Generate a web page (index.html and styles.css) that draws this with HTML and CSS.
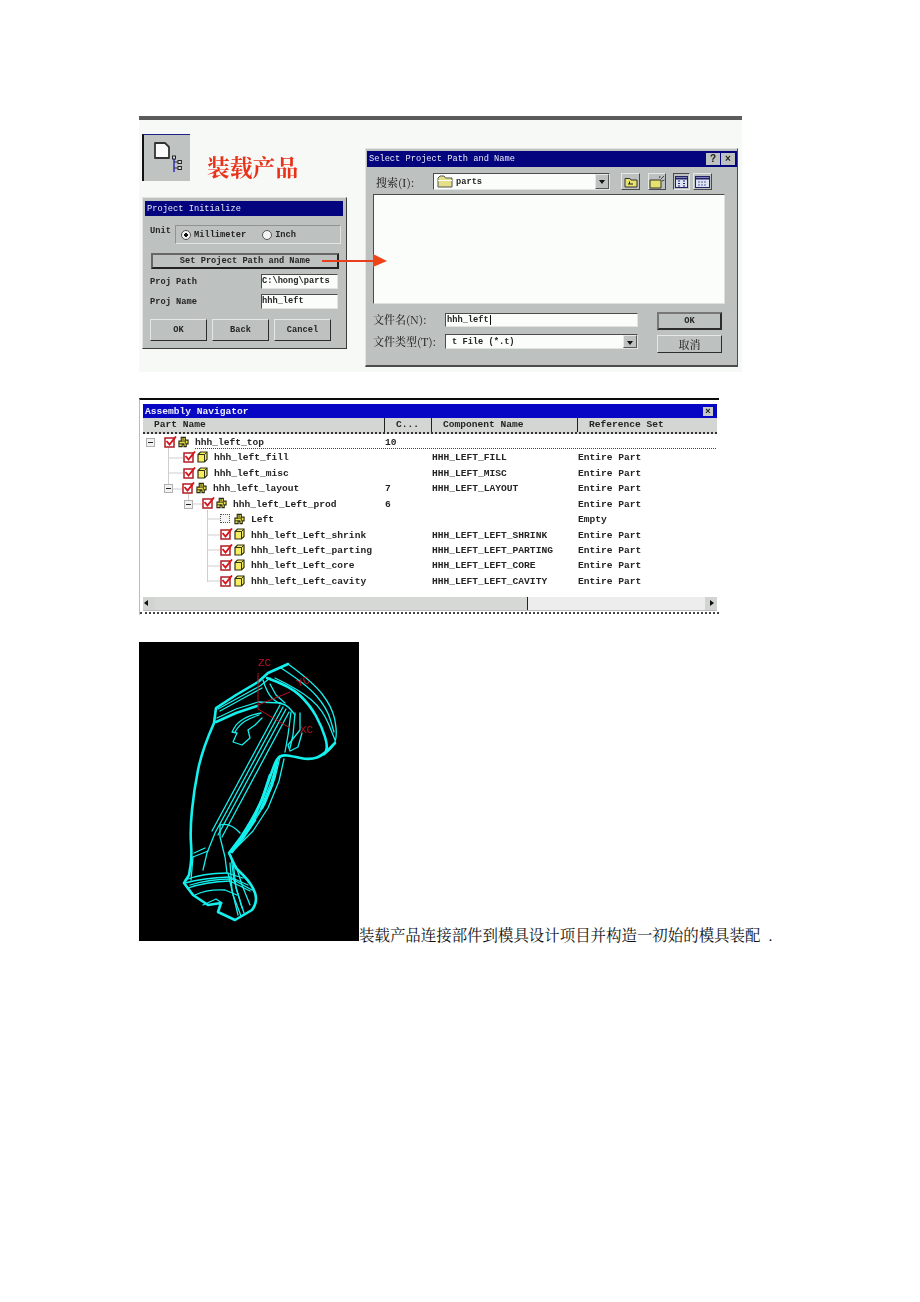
FILE: index.html
```html
<!DOCTYPE html>
<html lang="zh">
<head>
<meta charset="utf-8">
<title>装载产品</title>
<link rel="stylesheet" href="styles.css">
</head>
<body>
<svg class="defs" width="0" height="0" aria-hidden="true">
  <symbol id="check" viewBox="0 0 13 12">
    <rect x="1" y="2" width="9" height="9" fill="#fff" stroke="#b01c24" stroke-width="1.5"/>
    <path d="M2.500 5 L5.500 8.500 L12 .5" fill="none" stroke="#d8141c" stroke-width="1.9"/>
  </symbol>
  <symbol id="part" viewBox="0 0 11 12">
    <path d="M1 3.500 L3.500 1 H10 V8.500 L7.500 11 H1 Z" fill="#f4ee60" stroke="#33331a" stroke-width="1.200"/>
    <path d="M1 3.500 H7.500 V11 M7.500 3.500 L10 1" fill="none" stroke="#33331a" stroke-width="1"/>
  </symbol>
  <symbol id="asm" viewBox="0 0 12 12">
    <path d="M3.500 1 H8 V4 H11 V8 H9 V11 H6.500 V8.500 H4.500 V11 H1 V5 H3.500 Z" fill="#e8e04c" stroke="#2c2c14" stroke-width="1.200"/>
    <path d="M3.500 5 H8 V8 M1 8 H6.500 M5.500 1 V4" fill="none" stroke="#2c2c14" stroke-width="1"/>
  </symbol>
  <symbol id="minus" viewBox="0 0 9 9">
    <rect x=".5" y=".5" width="8" height="8" fill="#f2f2f2" stroke="#b0b0b0"/>
    <path d="M2 4.500 H7" stroke="#222" stroke-width="1"/>
  </symbol>
  <symbol id="folder" viewBox="0 0 16 13">
    <path d="M1 3 L3 1 H7 L8.500 3 H15 V12 H1 Z" fill="#e4e08a" stroke="#555" stroke-width="1"/>
    <path d="M1 5.500 H15" stroke="#fff" stroke-width="1"/>
  </symbol>
</svg>

<section class="fig-top">
  <div class="left-col">
    <div class="title-row">
      <div class="tool-icon">
        <svg class="tool-svg" viewBox="0 0 46 46" width="46" height="46" aria-hidden="true">
          <path d="M11 8 H21 L25 12 V23 H11 Z" fill="#fbfbfb" stroke="#333" stroke-width="1.800" stroke-linejoin="round"/>
          <path d="M30 24 V37" stroke="#4848c8" stroke-width="1.800"/>
          <path d="M30 27 H34 M30 33 H34" stroke="#333" stroke-width="1"/>
          <rect x="28.500" y="21" width="3" height="3" fill="#ddd" stroke="#222" stroke-width="1"/>
          <rect x="34" y="25.500" width="3.400" height="3" fill="#ddd" stroke="#222" stroke-width="1"/>
          <rect x="34" y="31.500" width="3.400" height="3" fill="#ddd" stroke="#222" stroke-width="1"/>
        </svg>
      </div>
      <h1 class="page-title">装载产品</h1>
    </div>
    <div class="dlg dlg-init">
      <div class="titlebar navy">Project Initialize</div>
      <div class="unit-row">
        <span class="unit-label">Unit</span>
        <div class="unit-box">
          <span class="radio on"></span><span class="radio-text">Millimeter</span>
          <span class="radio"></span><span>Inch</span>
        </div>
      </div>
      <div class="btn btn-wide">Set Project Path and Name</div>
      <div class="field-row"><span>Proj Path</span><div class="input field">C:\hong\parts</div></div>
      <div class="field-row"><span>Proj Name</span><div class="input field">hhh_left</div></div>
      <div class="btn-row">
        <div class="btn btn-act">OK</div>
        <div class="btn btn-act">Back</div>
        <div class="btn btn-act">Cancel</div>
      </div>
    </div>
  </div>

  <div class="dlg dlg-select">
    <div class="titlebar navy titlebar-split">
      <span>Select Project Path and Name</span>
      <span class="win-btns"><span class="win-btn">?</span><span class="win-btn">×</span></span>
    </div>
    <div class="search-row">
      <span class="cjk-label search-label">搜索(I):</span>
      <div class="input combo combo-search">
        <svg class="combo-folder" width="16" height="13" aria-hidden="true"><use href="#folder"/></svg>
        <span class="combo-text">parts</span>
        <span class="combo-arrow"></span>
      </div>
      <span class="tool-btn tb1"><svg viewBox="0 0 14 12" width="14" height="12" aria-hidden="true"><path d="M1 2.500 H6 L7 4 H13 V11 H1 Z" fill="#e6e26c" stroke="#333"/><path d="M4 8 H9 M5.500 8 V5.500" stroke="#222" fill="none"/></svg></span>
      <span class="tool-btn tb2"><svg viewBox="0 0 16 14" width="16" height="14" aria-hidden="true"><path d="M1 5 H12 V13 H1 Z" fill="#e6e26c" stroke="#333"/><path d="M12 4 L15 1 M10.500 3 L11 1 M13 6 L15.500 5" stroke="#444"/></svg></span>
      <span class="tool-btn tb3 pressed"><svg viewBox="0 0 13 12" width="13" height="12" aria-hidden="true"><rect x=".5" y=".5" width="12" height="11" fill="#dfe4f4" stroke="#22226a"/><path d="M.5 2.500 H12.500" stroke="#22226a" stroke-width="2"/><path d="M3 5 H5 M3 7.500 H5 M3 10 H5 M8 5 H10 M8 7.500 H10 M8 10 H10" stroke="#22226a"/></svg></span>
      <span class="tool-btn tb4"><svg viewBox="0 0 15 12" width="15" height="12" aria-hidden="true"><rect x=".5" y=".5" width="14" height="11" fill="#dfe4f4" stroke="#22226a"/><path d="M.5 2.500 H14.500" stroke="#22226a" stroke-width="2"/><path d="M3 6 H12 M3 9 H12" stroke="#5a5aa0" stroke-dasharray="2 1"/></svg></span>
    </div>
    <div class="file-list"></div>
    <div class="file-grid">
      <span class="cjk-label">文件名(N):</span>
      <div class="input name-input"><span class="caret-text">hhh_left</span></div>
      <div class="btn btn-ok">OK</div>
      <span class="cjk-label">文件类型(T):</span>
      <div class="input combo type-input"><span class="combo-text">t File (*.t)</span><span class="combo-arrow"></span></div>
      <div class="btn btn-cancel cjk-label">取消</div>
    </div>
  </div>

  <svg class="arrow" width="66" height="14" viewBox="0 0 66 14" aria-hidden="true">
    <path d="M0 7 H53" stroke="#e8401c" stroke-width="2"/>
    <path d="M51 0 L65 7 L51 13 Z" fill="#ee4418"/>
  </svg>
</section>

<section class="nav">
  <div class="nav-title"><span>Assembly Navigator</span><span class="nav-close">×</span></div>
  <div class="nav-head">
    <span class="head-first">Part Name</span>
    <span class="head-count">C...</span>
    <span class="head-comp">Component Name</span>
    <span class="head-ref">Reference Set</span>
  </div>
  <div class="tree">
    <svg class="tree-lines" width="580" height="163" viewBox="0 0 580 163" aria-hidden="true">
      <g stroke="#cfcfcf" fill="none">
        <path d="M29.500 12 V55 M29.500 24 H44 M29.500 39 H44 M33 55 H44"/>
        <path d="M49.500 60 V70 M52 70 H64"/>
        <path d="M68.500 76 V148 M68.500 85 H81 M68.500 101 H81 M68.500 116 H81 M68.500 132 H81 M68.500 147 H81"/>
      </g>
      <path d="M56 14.500 H578" stroke="#444" stroke-dasharray="1 1"/>
    </svg>
    <div class="row">
      <div class="cell-name lv0"><svg class="ic-minus" aria-hidden="true"><use href="#minus"/></svg><svg class="ic-check" aria-hidden="true"><use href="#check"/></svg><svg class="ic-part" aria-hidden="true"><use href="#asm"/></svg><span>hhh_left_top</span></div>
      <span>10</span><span></span><span></span>
    </div>
    <div class="row">
      <div class="cell-name lv1"><svg class="ic-check" aria-hidden="true"><use href="#check"/></svg><svg class="ic-part" aria-hidden="true"><use href="#part"/></svg><span>hhh_left_fill</span></div>
      <span></span><span>HHH_LEFT_FILL</span><span>Entire Part</span>
    </div>
    <div class="row">
      <div class="cell-name lv1"><svg class="ic-check" aria-hidden="true"><use href="#check"/></svg><svg class="ic-part" aria-hidden="true"><use href="#part"/></svg><span>hhh_left_misc</span></div>
      <span></span><span>HHH_LEFT_MISC</span><span>Entire Part</span>
    </div>
    <div class="row">
      <div class="cell-name lv1m"><svg class="ic-minus" aria-hidden="true"><use href="#minus"/></svg><svg class="ic-check" aria-hidden="true"><use href="#check"/></svg><svg class="ic-part" aria-hidden="true"><use href="#asm"/></svg><span>hhh_left_layout</span></div>
      <span>7</span><span>HHH_LEFT_LAYOUT</span><span>Entire Part</span>
    </div>
    <div class="row">
      <div class="cell-name lv2"><svg class="ic-minus" aria-hidden="true"><use href="#minus"/></svg><svg class="ic-check" aria-hidden="true"><use href="#check"/></svg><svg class="ic-part" aria-hidden="true"><use href="#asm"/></svg><span>hhh_left_Left_prod</span></div>
      <span>6</span><span></span><span>Entire Part</span>
    </div>
    <div class="row">
      <div class="cell-name lv3"><span class="ic-check ic-empty"></span><svg class="ic-part" aria-hidden="true"><use href="#asm"/></svg><span>Left</span></div>
      <span></span><span></span><span>Empty</span>
    </div>
    <div class="row">
      <div class="cell-name lv3"><svg class="ic-check" aria-hidden="true"><use href="#check"/></svg><svg class="ic-part" aria-hidden="true"><use href="#part"/></svg><span>hhh_left_Left_shrink</span></div>
      <span></span><span>HHH_LEFT_LEFT_SHRINK</span><span>Entire Part</span>
    </div>
    <div class="row">
      <div class="cell-name lv3"><svg class="ic-check" aria-hidden="true"><use href="#check"/></svg><svg class="ic-part" aria-hidden="true"><use href="#part"/></svg><span>hhh_left_Left_parting</span></div>
      <span></span><span>HHH_LEFT_LEFT_PARTING</span><span>Entire Part</span>
    </div>
    <div class="row">
      <div class="cell-name lv3"><svg class="ic-check" aria-hidden="true"><use href="#check"/></svg><svg class="ic-part" aria-hidden="true"><use href="#part"/></svg><span>hhh_left_Left_core</span></div>
      <span></span><span>HHH_LEFT_LEFT_CORE</span><span>Entire Part</span>
    </div>
    <div class="row">
      <div class="cell-name lv3"><svg class="ic-check" aria-hidden="true"><use href="#check"/></svg><svg class="ic-part" aria-hidden="true"><use href="#part"/></svg><span>hhh_left_Left_cavity</span></div>
      <span></span><span>HHH_LEFT_LEFT_CAVITY</span><span>Entire Part</span>
    </div>
  </div>
  <div class="scrollbar">
    <span class="sb-arrow sb-left"></span>
    <span class="sb-thumb"></span>
    <span class="sb-rest"></span>
    <span class="sb-arrow sb-right"></span>
  </div>
</section>

<p class="para"><svg class="arm" width="220" height="299" viewBox="139 642 220 299" role="img" aria-label="模具零件线框">
  <rect x="139" y="642" width="220" height="299" fill="#000"/>
  <g fill="none" stroke="#14f0ee" stroke-linejoin="round" stroke-linecap="round">
    <g stroke-width="2.600">
      <path d="M288 664 L268 673 L258 682 L236 695 L216 708 L214 723 Q202 750 198 770 T192 810 T191 843.500 T190.500 866 L189 875 L184 883 L193 895 L208 905 L221 903 L218 912 L235 920 L252 910 Q258 902 255 893 T243 875 L236 868 L229 853 L241 837 Q258 811 264.500 792.500 T274 766 T280 756.500"/>
      <path d="M335 743 Q324 755 317 757.500 T300.500 758 T287 755.500 T280 756.500"/>
      <path d="M267 678 Q290 686 300 695.500 T316 716 T325 737 T326 751"/>
      <path d="M216 722 L236 713 L257 706"/>
      <path d="M232 852 L243 838 L255 820"/>
      <path d="M270 775 L262 800 L252 822"/>
      <path d="M277 762 L272 785 L262 808"/>
    </g>
    <g stroke-width="1.300">
      <path d="M288 664 Q313 682 322.500 694.500 T334.500 718.500 T336 737.500 T329.500 750 L324 755"/>
      <path d="M275 678 Q300 690 311.500 700 T329 725 T335 740"/>
      <path d="M281 668 Q306 684 316.500 696 T330.500 720 T334 732"/>
      <path d="M217 718 L236 709 L258 702 L281 703"/>
      <path d="M218 709 L238 698 L260 686 L270 678"/>
      <path d="M220 711 L240 700 L262 688"/>
      <path d="M261 713 Q250 715 243.500 719 T234.500 727.500 L232 732 L237 733 L233 742 L242 745 L250 738 L248 730 L255 725 L262 718"/>
      <path d="M259 715 Q250 718 244.500 721.500 T235 732"/>
      <path d="M263 680 Q267 693 272 698 T282.500 704 T295 715"/>
      <path d="M270 684 L276 695 L285 703"/>
      <path d="M300 713 L300 730 L288 745 L290 751 L298 747 L302 733"/>
      <path d="M291 712 L288 735 L285 752"/>
      <path d="M295 713 L293 735 L290 748"/>
      <path d="M283 707 L215 833 L207 853 L203 870"/>
      <path d="M286 709 L218 835"/>
      <path d="M280 705 L212 831"/>
      <path d="M289 712 L222 837"/>
      <path d="M284 759 L279 781 L268 808 L253 831 L236 848"/>
      <path d="M280 757 L275 778 L265 804 L250 828 L232 849"/>
      <path d="M278 760 L271 782 L260 810 L246 832"/>
      <path d="M220 825 Q230 822 240 833"/>
      <path d="M220 825 L220 837 L225 857 L227 873"/>
      <path d="M193 857 L208 851"/>
      <path d="M194 853 L205 848"/>
      <path d="M185 880 Q203 873 227 873 L243 878"/>
      <path d="M185 883 Q203 878 230 877 L248 885"/>
      <path d="M188 888 Q205 882 230 881 L250 891"/>
      <path d="M190 885 Q210 879 232 879 L252 890"/>
      <path d="M195 895 Q207 889 225 890 L237 895"/>
      <path d="M203 905 L216 899 L222 903"/>
      <path d="M230 863 L232 890 L238 915"/>
      <path d="M233 861 L236 888 L244 913"/>
      <path d="M236 866 L242 885 L250 905"/>
      <path d="M228 873 L233 895 L241 916"/>
      <path d="M231 856 L234 880 L242 908"/>
      <path d="M193 857 L191 880"/>
    </g>
  </g>
  <g stroke="#b81020" fill="none">
    <path d="M258 673 V709 L290 728"/>
    <path d="M258 705 L290 692"/>
  </g>
  <g class="arm-label">
    <text x="258" y="666">ZC</text>
    <text x="298" y="687" transform="rotate(-20 298 687)">YC</text>
    <text x="300" y="733">XC</text>
  </g>
</svg><span class="para-text">装载产品连接部件到模具设计项目并构造一初始的模具装配</span><span class="para-dot">.</span></p>
</body>
</html>
```
FILE: styles.css
```css
* { box-sizing: border-box; }
html, body { margin: 0; padding: 0; }
body {
  background: #fff;
  padding: 116px 0 0 139px;
  font-family: "Liberation Mono", "DejaVu Sans Mono", monospace;
  font-size: 8.7px;
  color: #242424;
}
.defs { position: absolute; }

/* first figure */
.fig-top {
  position: relative;
  display: flex;
  width: 603px;
  height: 256px;
  padding-left: 3px;
  background: #f7f9f7;
  border-top: 4px solid #333;
  border-image: linear-gradient(#5c5c5c, #111) 4;
  filter: blur(.42px);
  font-weight: bold;
}
.left-col { width: 223px; padding-top: 14px; }
.title-row { display: flex; height: 47px; }
.tool-icon {
  width: 48px;
  height: 47px;
  background: #bfc3c1;
  border-left: 2px solid #111;
  border-top: 1px solid #20208a;
}
.tool-svg { display: block; }
.page-title {
  margin: 19px 0 0 17px;
  font: bold 22.800px/28px "Noto Serif CJK SC", "Noto Sans CJK SC", serif;
  color: #e8321a;
}
.dlg {
  background: #bdc1bf;
  border: 1px solid;
  border-color: #e2e4e2 #3a3c3a #3a3c3a #e2e4e2;
}
.titlebar {
  height: 15px;
  padding-left: 2px;
  line-height: 16px;
  font-weight: normal;
}
.navy { background: #04047e; color: #e8e8f4; }

.dlg-init {
  width: 205px;
  height: 152px;
  margin-top: 16px;
  padding: 3px 3px 0 2px;
}
.unit-row { display: flex; height: 19px; margin-top: 9px; padding: 0 2px 0 5px; }
.unit-label { width: 25px; line-height: 13px; }
.unit-box {
  flex: 1;
  display: flex;
  align-items: center;
  padding-left: 5px;
  border: 1px solid;
  border-color: #8f9391 #e2e4e2 #e2e4e2 #8f9391;
}
.radio {
  width: 10px;
  height: 10px;
  margin-right: 3px;
  border-radius: 50%;
  background: #f4f4f4;
  border: 1px solid #555;
}
.radio.on { background: radial-gradient(circle, #111 0 1.600px, #f4f4f4 2px); }
.radio-text { margin-right: 16px; }
.btn {
  display: flex;
  align-items: center;
  justify-content: center;
  background: #bdc1bf;
  border: 1px solid;
  border-color: #e6e8e6 #2c2c2c #2c2c2c #e6e8e6;
}
.btn-wide {
  height: 16px;
  margin: 9px 4px 0 6px;
  border: 2px solid #222;
  border-top-color: #666;
  border-left-color: #666;
}
.field-row { display: flex; align-items: center; height: 15px; margin-top: 5px; padding: 0 5px; }
.input {
  background: #fbfdfb;
  border: 1px solid;
  border-color: #4c4c4c #e2e4e2 #e2e4e2 #4c4c4c;
}
.field { width: 77px; height: 15px; margin-left: auto; line-height: 13px; white-space: nowrap; overflow: hidden; }
.btn-row { display: flex; gap: 5px; margin-top: 10px; padding-left: 5px; }
.btn-act { width: 57px; height: 22px; }

.dlg-select {
  width: 373px;
  height: 219px;
  margin-top: 28px;
  padding: 2px 0 0 1px;
  border-color: #e2e4e2 #4a4c4a #4a4c4a #e2e4e2;
  border-width: 1px 1px 2px 1px;
}
.titlebar-split {
  display: flex;
  justify-content: space-between;
  align-items: center;
  height: 16px;
  padding-right: 2px;
}
.win-btns { display: flex; gap: 1px; }
.win-btn {
  width: 14px;
  height: 12px;
  background: #bdc1bf;
  color: #222;
  font: bold 10px/12px "Liberation Sans", sans-serif;
  text-align: center;
}
.search-row { display: flex; align-items: center; height: 17px; margin-top: 6px; padding-left: 9px; }
.cjk-label {
  font: 500 11px/14px "Noto Serif CJK SC", "Noto Sans CJK SC", serif;
  color: #2c2c2c;
  white-space: nowrap;
}
.search-label { width: 57px; }
.combo { display: flex; align-items: center; padding-left: 3px; }
.combo-search { width: 177px; height: 17px; }
.combo-folder { flex: none; }
.combo-text { margin-left: 3px; white-space: pre; }
.combo-arrow {
  position: relative;
  width: 14px;
  height: 100%;
  margin-left: auto;
  background: #bdc1bf;
  border: 1px solid;
  border-color: #e6e8e6 #555 #555 #e6e8e6;
}
.combo-arrow::after {
  content: "";
  position: absolute;
  left: 3px;
  top: 5px;
  border: 3px solid transparent;
  border-top: 4px solid #111;
  border-bottom: 0;
}
.tool-btn {
  display: flex;
  flex: none;
  align-items: center;
  justify-content: center;
  height: 17px;
  border: 1px solid;
  border-color: #e6e8e6 #4a4a4a #4a4a4a #e6e8e6;
}
.pressed { border-color: #4a4a4a #e6e8e6 #e6e8e6 #4a4a4a; }
.tb1 { width: 19px; margin-left: 11px; }
.tb2 { width: 18px; margin-left: 8px; }
.tb3 { width: 17px; margin-left: 7px; }
.tb4 { width: 19px; margin-left: 3px; }
.file-list {
  width: 352px;
  height: 110px;
  margin: 4px 0 0 6px;
  background: #fbfdfb;
  border: 1px solid;
  border-color: #4a4c4a #dfe1df #dfe1df #4a4c4a;
}
.file-grid {
  display: grid;
  grid-template-columns: 72px 193px 84px;
  grid-template-rows: 22px 19px;
  margin: 8px 0 0 6px;
}
.file-grid > .btn { width: 65px; margin-left: 19px; }
.name-input { height: 14px; margin-top: 1px; padding-left: 1px; line-height: 12px; }
.caret-text { padding-right: 1px; border-right: 1px solid #111; }
.type-input { height: 15px; }
.btn-ok { height: 18px; border: 2px solid #2c2c2c; border-top-color: #777; border-left-color: #777; }
.btn-cancel { height: 18px; margin-top: 1px; }
.arrow { position: absolute; left: 183px; top: 134px; }

/* navigator */
.nav {
  position: relative;
  width: 580px;
  height: 217px;
  margin-top: 26px;
  padding: 4px 2px 0 3px;
  background: #fff;
  border-top: 2px solid #0c0c0c;
  border-left: 1px solid #bbb;
  filter: blur(.42px);
  font-size: 9.600px;
  font-weight: bold;
}
.nav-title {
  display: flex;
  justify-content: space-between;
  align-items: center;
  height: 14px;
  padding: 0 4px 0 2px;
  background: #0606c4;
  color: #eef;
}
.nav-close {
  width: 10px;
  height: 9px;
  background: #c8cac8;
  color: #111;
  font: bold 9px/9px "Liberation Sans", sans-serif;
  text-align: center;
}
.nav-head {
  display: grid;
  grid-template-columns: 242px 47px 146px 1fr;
  height: 16px;
  line-height: 14px;
  background: #d4d6d4;
  border-bottom: 2px dotted #333;
}
.nav-head > span { padding-left: 11px; border-right: 1px solid #222; }
.nav-head > span:last-child { border-right: 0; }
.tree { position: relative; height: 163px; padding-top: 1px; }
.tree-lines { position: absolute; left: -4px; top: 0; }
.row {
  position: relative;
  display: grid;
  grid-template-columns: 242px 47px 146px 1fr;
  height: 15.430px;
  line-height: 15.430px;
  white-space: nowrap;
}
.cell-name { display: flex; align-items: center; }
.ic-minus { flex: none; width: 9px; height: 9px; margin-right: 9px; }
.ic-check { flex: none; width: 13px; height: 12px; margin: -2px 1px 0 0; }
.ic-part { flex: none; width: 11px; height: 12px; margin: -2px 6px 0 0; }
.ic-empty { width: 10px; height: 9px; margin-right: 4px; background: #f4f4f4; border: 1px dotted #555; }
.lv0 { padding-left: 3px; }
.lv1 { padding-left: 40px; }
.lv1m { padding-left: 21px; }
.lv2 { padding-left: 41px; }
.lv3 { padding-left: 77px; }
.scrollbar {
  display: flex;
  height: 14px;
  background: #d2d4d2;
  border-bottom: 1px solid #bbb;
}
.sb-arrow { position: relative; flex: none; width: 12px; }
.sb-arrow::after {
  content: "";
  position: absolute;
  top: 3px;
  border: 3px solid transparent;
}
.sb-left::after { left: 1px; border-right: 4px solid #111; border-left: 0; }
.sb-right::after { left: 5px; border-left: 4px solid #111; border-right: 0; }
.sb-thumb { width: 373px; background: #d6d8d6; border-right: 1px solid #222; }
.sb-rest { flex: 1; background: #ededed; }
.nav::after {
  content: "";
  position: absolute;
  left: 0;
  right: 0;
  bottom: 1px;
  border-bottom: 2px dotted #444;
}

/* last paragraph */
.para {
  margin: 27px 0 0;
  white-space: nowrap;
  font: 400 15.450px/1 "Noto Serif CJK SC", "Noto Sans CJK SC", serif;
  color: #111;
}
.arm { vertical-align: baseline; filter: blur(.4px); }
.arm-label text { font: 400 11px "Liberation Mono", monospace; fill: #c01020; }
.para-dot { padding-left: 8px; font-family: "Liberation Serif", serif; }
```
